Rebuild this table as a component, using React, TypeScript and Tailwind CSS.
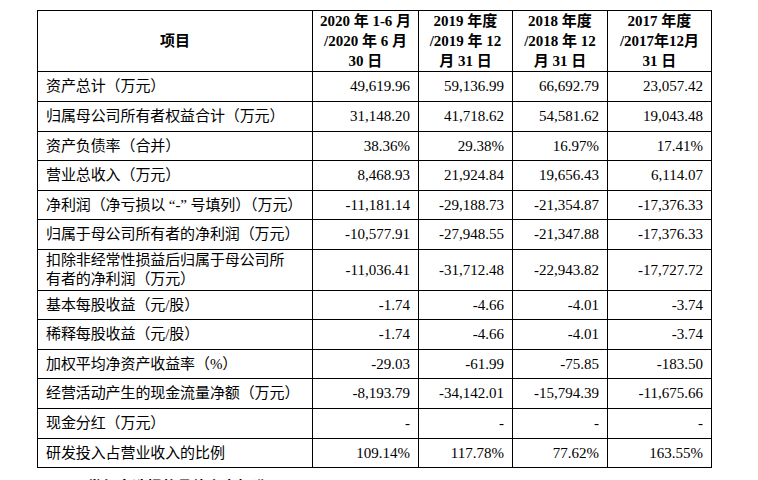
const rows: { label: React.ReactNode; values: string[]; h: string }[] = [
  { label: '资产总计（万元）', values: ['49,619.96', '59,136.99', '66,692.79', '23,057.42'], h: 'h-[30px]' },
  { label: '归属母公司所有者权益合计（万元）', values: ['31,148.20', '41,718.62', '54,581.62', '19,043.48'], h: 'h-[30px]' },
  { label: '资产负债率（合并）', values: ['38.36%', '29.38%', '16.97%', '17.41%'], h: 'h-[29px]' },
  { label: '营业总收入（万元）', values: ['8,468.93', '21,924.84', '19,656.43', '6,114.07'], h: 'h-[30px]' },
  { label: '净利润（净亏损以 “-” 号填列）（万元）', values: ['-11,181.14', '-29,188.73', '-21,354.87', '-17,376.33'], h: 'h-[29px]' },
  { label: '归属于母公司所有者的净利润（万元）', values: ['-10,577.91', '-27,948.55', '-21,347.88', '-17,376.33'], h: 'h-[30px]' },
  {
    label: (
      <>
        扣除非经常性损益后归属于母公司所
        <br />
        有者的净利润（万元）
      </>
    ),
    values: ['-11,036.41', '-31,712.48', '-22,943.82', '-17,727.72'],
    h: 'h-[41px]',
  },
  { label: '基本每股收益（元/股）', values: ['-1.74', '-4.66', '-4.01', '-3.74'], h: 'h-[29px]' },
  { label: '稀释每股收益（元/股）', values: ['-1.74', '-4.66', '-4.01', '-3.74'], h: 'h-[30px]' },
  { label: '加权平均净资产收益率（%）', values: ['-29.03', '-61.99', '-75.85', '-183.50'], h: 'h-[29px]' },
  { label: '经营活动产生的现金流量净额（万元）', values: ['-8,193.79', '-34,142.01', '-15,794.39', '-11,675.66'], h: 'h-[30px]' },
  { label: '现金分红（万元）', values: ['-', '-', '-', '-'], h: 'h-[30px]' },
  { label: '研发投入占营业收入的比例', values: ['109.14%', '117.78%', '77.62%', '163.55%'], h: 'h-[29px]' },
]

const headers: string[][] = [
  ['2020 年 1-6 月', '/2020 年 6 月', '30 日'],
  ['2019 年度', '/2019 年 12', '月 31 日'],
  ['2018 年度', '/2018 年 12', '月 31 日'],
  ['2017 年度', '/2017年12月', '31 日'],
]

export default function App() {
  return (
    <div className="w-[758px] h-[480px] overflow-hidden bg-white text-black font-['Liberation_Serif','Noto_Sans_CJK_SC',serif]">
      <table className="mt-[10px] ml-[37px] w-[674px] table-fixed border-collapse text-[15px]">
        <colgroup>
          <col className="w-[275px]" />
          <col className="w-[106px]" />
          <col className="w-[94px]" />
          <col className="w-[95px]" />
          <col className="w-[104px]" />
        </colgroup>
        <thead>
          <tr className="h-[60px]">
            <th className="border border-black font-bold text-center align-middle">项目</th>
            {headers.map((lines, i) => (
              <th key={i} className="border border-black font-bold text-center align-middle leading-[20px] px-0">
                {lines.map((l, j) => (
                  <div key={j} className="whitespace-nowrap">{l}</div>
                ))}
              </th>
            ))}
          </tr>
        </thead>
        <tbody>
          {rows.map((row, i) => (
            <tr key={i} className={row.h}>
              <td className="border border-black pl-2 pr-1 align-middle leading-[19px] whitespace-nowrap tracking-[-0.1px]">{row.label}</td>
              {row.values.map((v, j) => (
                <td key={j} className="border border-black pr-2 text-right align-middle">
                  {v}
                </td>
              ))}
            </tr>
          ))}
        </tbody>
      </table>
      <p className="mt-[9px] ml-[87px] text-[15px] font-bold leading-[20px]">发行人选择的具体上市标准</p>
    </div>
  )
}
